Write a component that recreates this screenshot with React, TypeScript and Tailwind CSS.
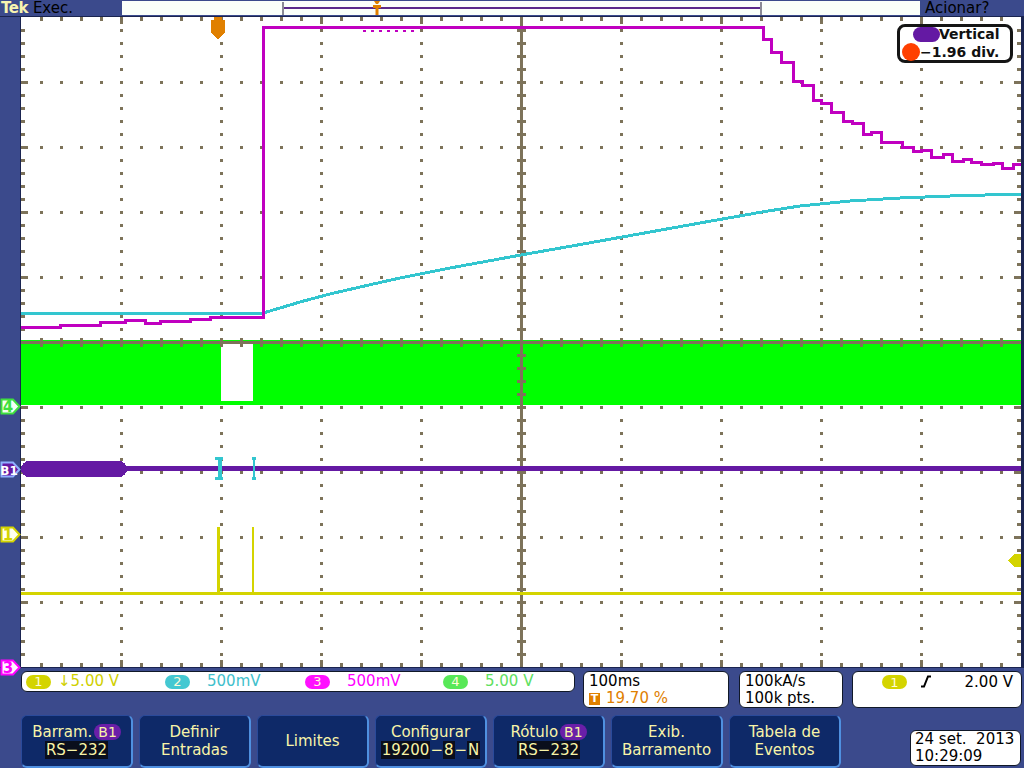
import React from 'react';

const GRID = '#7d735a';
const MAGENTA = '#c000c0';
const CYAN = '#33c6cf';
const YELLOW = '#d4d400';
const PURPLE = '#6419a3';

const cyanPts: [number, number][] = [
  [21, 313], [263, 313], [280, 308], [300, 302], [330, 294], [360, 287], [400, 278],
  [450, 268], [521, 255], [600, 241], [650, 232], [700, 223], [762, 212], [800, 206],
  [850, 201], [900, 198], [950, 196], [1021, 194],
];

function magentaPath() {
  let d = 'M21 327 H60 V325 H100 V322 H125 V320 H145 V323 H160 V321 H190 V319 H210 V317 H263.5 V27.5 H763';
  let x = 763;
  let i = 0;
  while (x < 1021) {
    const w = 8 + ((i * 7) % 5);
    const nx = Math.min(x + w, 1021);
    const y = 175 - 148 * Math.exp(-(x - 755) / 88) + Math.sin(i * 2.7) * 3;
    d += ` V${y.toFixed(1)} H${nx}`;
    x = nx;
    i++;
  }
  return d;
}

function Graticule() {
  const els: React.ReactNode[] = [];
  for (let k = 1; k < 10; k++) {
    if (k === 5) continue;
    for (let j = 1; j < 50; j++) {
      els.push(<rect key={`v${k}-${j}`} x={100 * k - 1} y={13 * j - 1} width={3} height={3} fill={GRID} />);
      els.push(<rect key={`h${k}-${j}`} x={20 * j - 1} y={65 * k - 1} width={3} height={3} fill={GRID} />);
    }
  }
  for (let j = 1; j < 50; j++) {
    const major = j % 5 === 0;
    const l = major ? 7 : 4;
    els.push(<rect key={`t${j}`} x={20 * j - 1} y={0} width={3} height={l} fill={GRID} />);
    els.push(<rect key={`b${j}`} x={20 * j - 1} y={650 - l} width={3} height={l} fill={GRID} />);
    els.push(<rect key={`l${j}`} x={0} y={13 * j - 1} width={l} height={3} fill={GRID} />);
    els.push(<rect key={`r${j}`} x={1000 - l} y={13 * j - 1} width={l} height={3} fill={GRID} />);
  }
  return <g>{els}</g>;
}

function CenterCross() {
  const els: React.ReactNode[] = [];
  for (let j = 1; j < 50; j++) {
    els.push(<rect key={`ch${j}`} x={20 * j - 1} y={321} width={3} height={9} fill={GRID} />);
    els.push(<rect key={`cv${j}`} x={496} y={13 * j - 1} width={9} height={3} fill={GRID} />);
  }
  return (
    <g>
      <rect x={0} y={324} width={1000} height={3} fill={GRID} />
      <rect x={499} y={0} width={3} height={650} fill={GRID} />
      {els}
    </g>
  );
}

function Plot() {
  return (
    <svg width={1000} height={650} viewBox="0 0 1000 650" className="block bg-white" shapeRendering="crispEdges">
      <Graticule />
      <g transform="translate(-21,-17)">
        {/* channel 4 band */}
        <rect x={21} y={340} width={1000} height={65} fill="#00ff00" />
        <rect x={221} y={343} width={32} height={58} fill="#ffffff" />
      </g>
      <CenterCross />
      <g transform="translate(-21,-17)">
        {/* trigger position marker */}
        <path d="M214 17 H222 V20 H225 V33 L218 39 L211 33 V20 H214 Z" fill="#e08000" />

        {/* channel 2 */}
        <polyline points={cyanPts.map((p) => p.join(',')).join(' ')} fill="none" stroke={CYAN} strokeWidth={3} />
        {/* channel 3 */}
        <path d={magentaPath()} fill="none" stroke={MAGENTA} strokeWidth={3} />
        <line x1={363} y1={30.5} x2={419} y2={30.5} stroke={MAGENTA} strokeWidth={2} strokeDasharray="3 5" />

        {/* bus B1 */}
        <rect x={21} y={466} width={1000} height={5} fill={PURPLE} />
        <rect x={21} y={461} width={106} height={16} rx={8} fill={PURPLE} />
        <path d="M215 457 H223 V460 H221.5 V477 H223 V480 H215 V477 H217.5 V460 H215 Z" fill={CYAN} />
        <path d="M252 457 H256 V460 H255 V477 H256 V480 H252 V477 H253 V460 H252 Z" fill={CYAN} />

        {/* channel 1 */}
        <rect x={21} y={592} width={1000} height={3} fill={YELLOW} />
        <rect x={217} y={527} width={3} height={66} fill={YELLOW} />
        <rect x={252} y={527} width={2} height={66} fill={YELLOW} />
        <path d="M1008 560 L1014 554 H1021 V567 H1014 Z" fill={YELLOW} />
      </g>
    </svg>
  );
}

function Marker({ label, color, fill, text, top }: { label: string; color: string; fill: string; text: string; top: number }) {
  return (
    <svg width={21} height={17} viewBox="0 0 21 17" className="absolute left-0" style={{ top }}>
      <path d="M1.5 1.5 H13 L19.5 8.5 L13 15.5 H1.5 Z" fill={fill} stroke={color} strokeWidth={2} />
      <text x={label.length > 1 ? 9 : 8} y={14} textAnchor="middle" fontFamily="DejaVu Sans" fontWeight="bold" fontSize={label.length > 1 ? 12 : 15} fill={text}>
        {label}
      </text>
    </svg>
  );
}

function TopBar() {
  return (
    <div className="flex h-[17px] border-b border-[#1a2450]">
      <div className="flex w-[122px] items-center pl-[1px]">
        <span className="text-[15px] font-bold leading-[16px] tracking-[-0.5px] text-[#f8f4b0]">Tek</span>
        <span className="ml-[5px] text-[15px] leading-[16px] text-black">Exec.</span>
      </div>
      <div className="relative my-[1px] w-[798px] bg-[#fafffa]">
        <div className="absolute left-[160px] top-[1px] h-[13px] w-[480px] border-x-2 border-[#8a8a96]">
          <div className="mt-[5px] h-[2px] bg-[#5a2a8a]" />
        </div>
        <svg width={10} height={14} viewBox="0 0 10 14" className="absolute left-[250px] top-0">
          <path d="M2 0 H8 L6 3 H4 Z" fill="#e08000" />
          <rect x={1} y={4} width={8} height={3} fill="#e08000" />
          <rect x={3.5} y={7} width={3} height={7} fill="#e08000" />
        </svg>
      </div>
      <div className="flex flex-1 items-center pl-[5px]">
        <span className="text-[15px] leading-[16px] text-black">Acionar?</span>
      </div>
    </div>
  );
}

function Pill({ n, bg }: { n: string; bg: string }) {
  return (
    <span className={`flex h-[14px] w-[25px] items-center justify-center rounded-full text-[13px] leading-none text-[#fffbd8] ${bg}`}>
      {n}
    </span>
  );
}

function StatusRow() {
  return (
    <div className="flex h-[47px] items-start gap-[8px] pl-[21px] pt-[3px]">
      <div className="flex h-[21px] w-[554px] items-center rounded-[6px] border border-[#101828] bg-white pl-[4px] text-[15px] leading-none">
        <div className="flex w-[139px] items-center">
          <Pill n="1" bg="bg-[#d4d400]" />
          <span className="ml-[7px] text-[#d0d000]">↓5.00 V</span>
        </div>
        <div className="flex w-[140px] items-center">
          <Pill n="2" bg="bg-[#44c8d2]" />
          <span className="ml-[17px] text-[#40c0cc]">500mV</span>
        </div>
        <div className="flex w-[138px] items-center">
          <Pill n="3" bg="bg-[#ff10ff]" />
          <span className="ml-[17px] text-[#ff00ff]">500mV</span>
        </div>
        <div className="flex items-center">
          <Pill n="4" bg="bg-[#58e858]" />
          <span className="ml-[17px] text-[#60e060]">5.00 V</span>
        </div>
      </div>
      <div className="flex h-[37px] w-[146px] flex-col rounded-[6px] border border-[#101828] bg-white px-[5px] pt-[1px] text-[15px] leading-[17px] text-black">
        <span>100ms</span>
        <span className="flex items-center text-[#e08000]">
          <span className="mr-[6px] flex h-[12px] w-[11px] items-center justify-center bg-[#e08000] text-[11px] font-bold leading-none text-white">T</span>
          19.70 %
        </span>
      </div>
      <div className="ml-[2px] flex h-[37px] w-[104px] flex-col rounded-[6px] border border-[#101828] bg-white px-[5px] pt-[1px] text-[15px] leading-[17px] text-black">
        <span>100kA/s</span>
        <span>100k pts.</span>
      </div>
      <div className="ml-[1px] flex h-[37px] w-[170px] items-start rounded-[6px] border border-[#101828] bg-white pl-[29px] pr-[8px] pt-[3px] text-[15px] leading-[15px] text-black">
        <Pill n="1" bg="bg-[#d4d400]" />
        <svg width={12} height={13} viewBox="0 0 12 13" className="ml-[13px]">
          <path d="M1 11.5 H4 L8 1.5 H11" fill="none" stroke="#000" strokeWidth={2} />
        </svg>
        <span className="ml-auto">2.00 V</span>
      </div>
    </div>
  );
}

function SoftButton({ children }: { children: React.ReactNode }) {
  return (
    <div className="flex h-[53px] w-[112px] flex-col items-center justify-center rounded-[6px] border border-b-2 border-r-2 border-[#2a4a9a] border-b-[#4f90e0] border-r-[#4f90e0] bg-[#0e2968] text-[15px] leading-[18px] text-[#f8f4a8]">
      {children}
    </div>
  );
}

const Hl = ({ children }: { children: React.ReactNode }) => <span className="bg-[#0a0e1c] px-[1px]">{children}</span>;
const B1 = () => <span className="ml-[2px] rounded-full bg-[#6a1fa8] px-[4px] text-[14px] leading-[16px]">B1</span>;

function ButtonRow() {
  return (
    <div className="flex h-[54px] items-start gap-[6px] pl-[21px]">
      <SoftButton>
        <span className="flex items-center">Barram.<B1 /></span>
        <Hl>RS−232</Hl>
      </SoftButton>
      <SoftButton>
        <span>Definir</span>
        <span>Entradas</span>
      </SoftButton>
      <SoftButton>
        <span>Limites</span>
      </SoftButton>
      <SoftButton>
        <span>Configurar</span>
        <span>
          <Hl>19200</Hl>−<Hl>8</Hl>−<Hl>N</Hl>
        </span>
      </SoftButton>
      <SoftButton>
        <span className="flex items-center">Rótulo<B1 /></span>
        <Hl>RS−232</Hl>
      </SoftButton>
      <SoftButton>
        <span>Exib.</span>
        <span>Barramento</span>
      </SoftButton>
      <SoftButton>
        <span>Tabela de</span>
        <span>Eventos</span>
      </SoftButton>
      <div className="ml-auto mr-[3px] mt-[15px] flex h-[36px] w-[111px] flex-col rounded-[6px] border border-[#101828] bg-white px-[4px] text-[15px] leading-[17px] text-black">
        <span className="whitespace-pre">24 set.  2013</span>
        <span>10:29:09</span>
      </div>
    </div>
  );
}

export default function App() {
  return (
    <div className="flex h-[768px] w-[1024px] flex-col overflow-hidden bg-[#3b4a8c] font-['DejaVu_Sans',sans-serif]">
      <TopBar />
      <div className="flex h-[651px] border-b border-[#1a2450]">
        <div className="relative w-[21px] border-r border-[#1a2450]">
          <Marker label="4" color="#3ee03e" fill="#f4fff4" text="#3ee03e" top={381} />
          <Marker label="B1" color="#8fb0ff" fill={PURPLE} text="#ffffff" top={444} />
          <Marker label="1" color="#d4d400" fill="#fffff0" text="#d4d400" top={509} />
          <div className="absolute left-0 top-[642px] z-10">
            <Marker label="3" color="#ff00ff" fill="#fff4ff" text="#ff00ff" top={0} />
          </div>
        </div>
        <div className="relative">
          <Plot />
          <div className="absolute left-[876px] top-[7px] flex h-[39px] w-[116px] flex-col justify-center rounded-[8px] border-[3px] border-[#151515] bg-white pl-[1px] text-[14px] font-bold leading-[17px] text-[#111]">
            <div className="flex items-center">
              <span className="ml-[12px] h-[15px] w-[27px] rounded-full bg-[#6419a3]" />
              <span className="-ml-[1px]">Vertical</span>
            </div>
            <div className="flex items-center">
              <span className="ml-[1px] h-[18px] w-[18px] rounded-full bg-[#ff4000]" />
              <span>−1.96 div.</span>
            </div>
          </div>
        </div>
        <div className="flex-1 bg-[#1a2450]" />
      </div>
      <StatusRow />
      <ButtonRow />
    </div>
  );
}
